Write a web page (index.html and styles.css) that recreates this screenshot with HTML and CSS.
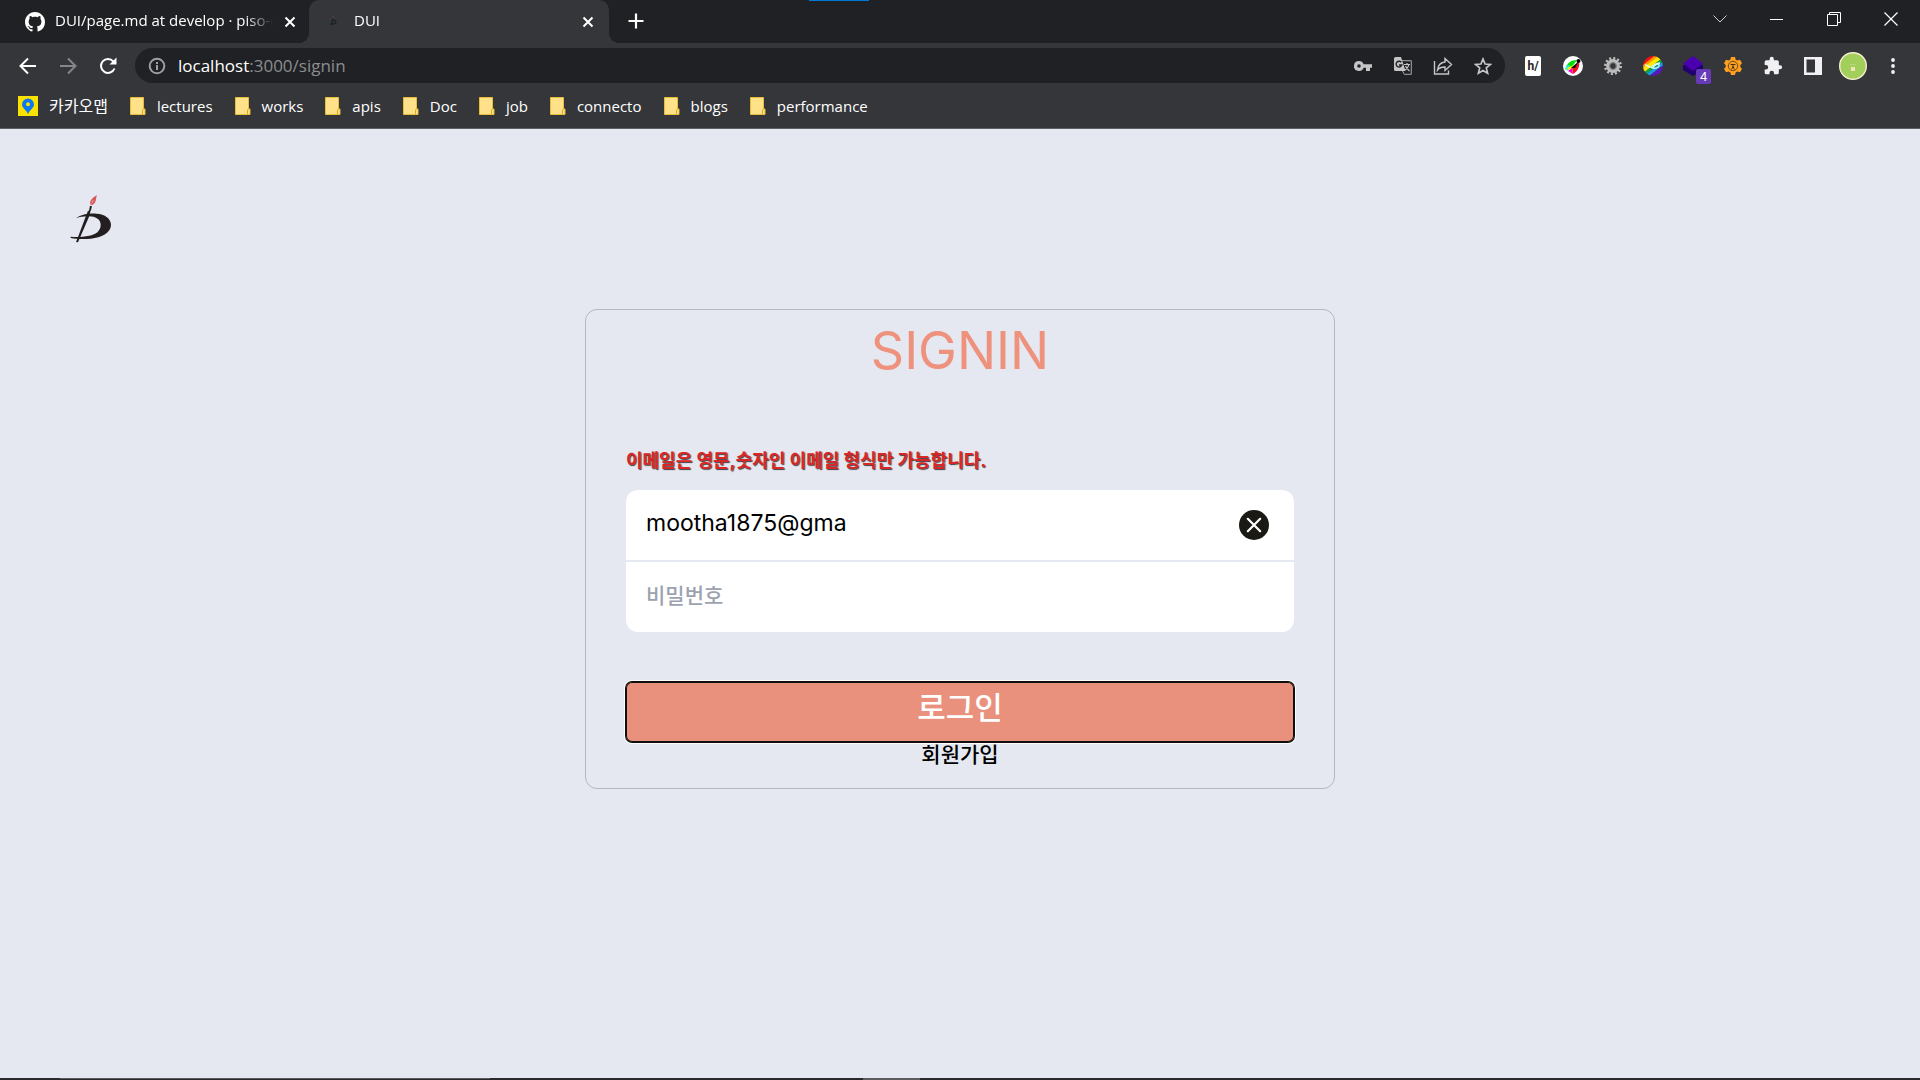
FILE: index.html
```html
<!DOCTYPE html>
<html lang="ko">
<head>
<meta charset="utf-8">
<meta name="viewport" content="width=device-width, initial-scale=1">
<title>DUI</title>
<link rel="stylesheet" href="styles.css">
</head>
<body>
<header class="browser">
  <div class="tabstrip">
    <div class="tab">
      <svg class="tab-icon" viewBox="0 0 16 16" fill="#fff"><path d="M8 0C3.58 0 0 3.58 0 8c0 3.54 2.29 6.53 5.47 7.59.4.07.55-.17.55-.38 0-.19-.01-.82-.01-1.49-2.01.37-2.53-.49-2.69-.94-.09-.23-.48-.94-.82-1.13-.28-.15-.68-.52-.01-.53.63-.01 1.08.58 1.23.82.72 1.21 1.87.87 2.33.66.07-.52.28-.87.51-1.07-1.78-.2-3.64-.89-3.64-3.95 0-.87.31-1.59.82-2.15-.08-.2-.36-1.02.08-2.12 0 0 .67-.21 2.2.82.64-.18 1.32-.27 2-.27s1.36.09 2 .27c1.53-1.04 2.2-.82 2.2-.82.44 1.1.16 1.92.08 2.12.51.56.82 1.27.82 2.15 0 3.07-1.87 3.75-3.65 3.95.29.25.54.73.54 1.48 0 1.07-.01 1.93-.01 2.2 0 .21.15.46.55.38A8.01 8.01 0 0 0 16 8c0-4.42-3.58-8-8-8z"/></svg>
      <span class="tab-title">DUI/page.md at develop · piso-d</span>
      <button class="tab-close" aria-label="Close tab"><svg width="12" height="12" viewBox="0 0 12 12"><path d="M1.500 1.500l9 9m0-9l-9 9" stroke="#fff" stroke-width="2"/></svg></button>
    </div>
    <div class="tab active">
      <svg class="tab-icon" viewBox="0 0 20 20" fill="none"><path d="M9 7l-2 6M8 8c4 0 6 4 0 4" stroke="#202124" stroke-width="1.500"/><path d="M9 4l1 2" stroke="#6b3a3c"/></svg>
      <span class="tab-title">DUI</span>
      <button class="tab-close" aria-label="Close tab"><svg width="12" height="12" viewBox="0 0 12 12"><path d="M1.500 1.500l9 9m0-9l-9 9" stroke="#fff" stroke-width="2"/></svg></button>
    </div>
    <button class="new-tab" aria-label="New tab"><svg width="16" height="16" viewBox="0 0 16 16"><path d="M8 0.500v15M0.500 8h15" stroke="#fff" stroke-width="2.200"/></svg></button>
    <div class="window-controls">
      <button aria-label="Search tabs"><svg width="14" height="14" viewBox="0 0 14 14" fill="none" stroke="#d0d0d2"><path d="M.5 3.500L7 10l6.500-6.500"/></svg></button>
      <button aria-label="Minimize"><svg width="14" height="14" viewBox="0 0 14 14" fill="none" stroke="#fff"><path d="M0 7.500h13"/></svg></button>
      <button aria-label="Restore"><svg width="14" height="14" viewBox="0 0 14 14" fill="none" stroke="#fff"><path d="M.5 2.500h10v11H.5zM2.500 2.500v-2h11v10h-3"/></svg></button>
      <button aria-label="Close"><svg width="14" height="14" viewBox="0 0 14 14" fill="none" stroke="#fff" stroke-width="1.200"><path d="M.5.5l13 13m0-13l-13 13"/></svg></button>
    </div>
  </div>

  <div class="toolbar">
    <button class="nav" aria-label="Back"><svg width="18" height="18" viewBox="0 0 18 18" fill="none" stroke="#fff" stroke-width="2"><path d="M17 9H2M9 1.500L1.500 9 9 16.500"/></svg></button>
    <button class="nav" aria-label="Forward"><svg width="18" height="18" viewBox="0 0 18 18" fill="none" stroke="#85868a" stroke-width="2"><path d="M1 9h15M9 1.500L16.500 9 9 16.500"/></svg></button>
    <button class="nav" aria-label="Reload"><svg width="18" height="18" viewBox="0 0 18 18" fill="none" stroke="#fff" stroke-width="2"><path d="M15.500 11.500a7 7 0 1 1-1.200-7.200L16 6"/><path d="M17.500.5v7h-7z" fill="#fff" stroke="none"/></svg></button>
    <div class="omnibox">
      <svg width="18" height="18" viewBox="0 0 18 18" fill="none" stroke="#9aa0a6" stroke-width="2"><circle cx="9" cy="9" r="7.300"/><path d="M9 8v5M9 5v2"/></svg>
      <div class="url">localhost<span class="url-rest">:3000/signin</span></div>
      <button class="tool" aria-label="Passwords"><svg width="18" height="18" viewBox="0 0 18 18"><path fill="#c5c5c7" fill-rule="evenodd" d="M5 4a5 5 0 1 0 4.600 6.800H12V14h4v-3.200h2V7.200H9.600A5 5 0 0 0 5 4zm0 3.200a1.800 1.800 0 1 1 0 3.600 1.800 1.800 0 0 1 0-3.600z"/></svg></button>
      <button class="tool" aria-label="Translate"><svg width="18" height="18" viewBox="0 0 18 18" fill="none"><path d="M8 3.700h9.300v13.600h-7L8 13" stroke="#a9a9ab" stroke-width="1"/><path d="M0 1.500A1.500 1.500 0 0 1 1.500 0H7l4.500 14H1.500A1.500 1.500 0 0 1 0 12.500z" fill="#c5c5c7"/><path d="M7.300 5.300A2.900 2.900 0 1 0 7.800 8H5" stroke="#202124" stroke-width="1.400"/><path d="M10 7.500h6M13 6v1.500M15 7.500c-.5 2.500-2 4-4 5.500M11.500 9c1 2.500 2 3.500 4 5" stroke="#c5c5c7" stroke-width="1.200"/></svg></button>
      <button class="tool" aria-label="Share"><svg width="20" height="18" viewBox="0 0 20 18" fill="none" stroke="#c5c5c7" stroke-width="1.400"><path d="M1.500 4v13h14v-3.500"/><path d="M12 5V1.500l6.500 6-6.500 6V10c-4 0-6 1-7.500 3C5 8.500 7 5.500 12 5z"/></svg></button>
      <button class="tool" aria-label="Bookmark"><svg width="18" height="18" viewBox="0 0 18 18" fill="none" stroke="#c5c5c7" stroke-width="1.700"><path d="M9 2l2.100 5 5.300.4-4.100 3.500 1.300 5.300L9 13.400l-4.600 2.800 1.300-5.300-4.100-3.500L6.900 7z"/></svg></button>
    </div>
    <div class="extensions">
      <button class="tool" aria-label="Hypothesis"><span class="ext-h">h/</span></button>
      <button class="tool" aria-label="Color picker"><svg width="20" height="20" viewBox="0 0 20 20"><circle cx="10" cy="10" r="10" fill="#fff"/><path d="M3 14C2 9 7 4 14 4L8 12z" fill="#0d0"/><path d="M3 10l-1 3 3 2 2-6z" fill="#2ee"/><path d="M3 13l5 1 3-5-5 2z" fill="#fe0"/><path d="M16 6c1 5-2 10-6 12l-1-6z" fill="#f01020"/><path d="M5 15l4-3 1 6z" fill="#f0c"/><path d="M8 12l8-7-4 7z" fill="#000"/><circle cx="15.500" cy="5" r="2" fill="#000"/></svg></button>
      <button class="tool" aria-label="Gear"><svg width="18" height="18" viewBox="0 0 18 18" fill="none"><circle cx="9" cy="9" r="7.700" stroke="#bdbdbd" stroke-width="2.600" stroke-dasharray="2.020 2.010"/><circle cx="9" cy="9" r="4.900" stroke="#bbb" stroke-width="4"/><circle cx="9" cy="9" r="3.500" stroke="#777"/></svg></button>
      <button class="tool" aria-label="Rainbow"><svg width="20" height="20" viewBox="0 0 20 20"><clipPath id="disc"><circle cx="10" cy="10" r="10"/></clipPath><g clip-path="url(#disc)"><g transform="rotate(-38 10 10)"><path d="M-4-4h28v8H-4z" fill="#ef1111"/><path d="M-4 3h28v3H-4z" fill="#ff9800"/><path d="M-4 5.500h28v4H-4z" fill="#ffe900"/><path d="M-4 9.500h28v3H-4z" fill="#16a34a"/><path d="M-4 12.500h28v3H-4z" fill="#139ee8"/><path d="M-4 15.500h28v8H-4z" fill="#5b16b8"/></g><path d="M2 9c3 0 4 3 6 2s4-4 9-4M8 11c3 3 9 0 8-2s-5 0-6 3" fill="none" stroke="#d8fff5" stroke-width="1.300"/></g></svg></button>
      <button class="tool badged" aria-label="Layers"><svg width="20" height="20" viewBox="0 0 20 20"><path d="M0 9v5l10 6 10-6V9z" fill="#210070"/><path d="M10 0l10 7.500L10 15 0 7.500z" fill="#4b00b0"/></svg><span class="badge">4</span></button>
      <button class="tool" aria-label="Accessibility"><svg width="18" height="18" viewBox="0 0 18 18"><path d="M7 0h4l.6 2.600 1.600 1L16 2.800l2 3.400L16.300 8v2l1.700 1.800-2 3.400-2.800-.8-1.600 1L11 18H7l-.6-2.600-1.600-1-2.800.8-2-3.400L1.700 10V8L0 6.200l2-3.400 2.800.8 1.600-1z" fill="#ffa01e"/><circle cx="9" cy="9" r="4.700" fill="none" stroke="#4a3520" stroke-width=".8"/><path d="M6.500 7.500h5M9 7v3M9 9.500l-1.500 3M9 9.500l1.500 3" stroke="#4a3520"/></svg></button>
      <button class="tool" aria-label="Extensions"><svg width="20" height="20" viewBox="0 0 24 24" fill="#f1f1f3"><path d="M20.500 11H19V7a2 2 0 0 0-2-2h-4V3.500a2.500 2.500 0 0 0-5 0V5H4a2 2 0 0 0-2 2v3.800h1.500a2.700 2.700 0 0 1 0 5.400H2V20a2 2 0 0 0 2 2h3.800v-1.500a2.700 2.700 0 0 1 5.400 0V22H17a2 2 0 0 0 2-2v-4h1.500a2.500 2.500 0 0 0 0-5z"/></svg></button>
      <button class="tool" aria-label="Side panel"><svg width="18" height="18" viewBox="0 0 18 18"><path fill="#f1f1f3" fill-rule="evenodd" d="M0 0h18v18H0zM2.500 2.500v13H11v-13z"/></svg></button>
      <button class="tool" aria-label="Profile"><svg width="28" height="28" viewBox="0 0 28 28"><circle cx="14" cy="14" r="13.300" fill="#a2cf5c" stroke="#f6efcf" stroke-width="1.400"/><path d="M12 15h4v4h-4z" fill="#f3e6b5"/><path d="M11 12.500h6" stroke="#b9d67c"/></svg></button>
      <button class="tool" aria-label="Menu"><svg width="4" height="16" viewBox="0 0 4 16" fill="#f1f1f3"><circle cx="2" cy="2" r="1.900"/><circle cx="2" cy="8" r="1.900"/><circle cx="2" cy="14" r="1.900"/></svg></button>
    </div>
  </div>

  <svg class="defs" width="0" height="0"><symbol id="folder" viewBox="0 0 16 18"><path d="M.5.5h13V12H15v5.500H.5z" fill="#ffe18a" stroke="#e8bd37"/><path d="M12.500 17.500V13l1.500-1.500" fill="none" stroke="#d9ab25"/></symbol></svg>
  <nav class="bookmarks" aria-label="Bookmarks">
    <a href="#"><svg width="20" height="20" viewBox="0 0 20 20"><path d="M0 0h20v20H0z" fill="#fae100"/><path fill="#0c79f2" d="M10 2.500a6 6 0 0 0-6 6c0 3.500 4 5 6 9.500 2-4.500 6-6 6-9.500a6 6 0 0 0-6-6z"/><circle cx="10" cy="8.300" r="2" fill="#fae100"/></svg><span class="korean">카카오맵</span></a>
    <a href="#"><svg class="folder"><use href="#folder"/></svg>lectures</a>
    <a href="#"><svg class="folder"><use href="#folder"/></svg>works</a>
    <a href="#"><svg class="folder"><use href="#folder"/></svg>apis</a>
    <a href="#"><svg class="folder"><use href="#folder"/></svg>Doc</a>
    <a href="#"><svg class="folder"><use href="#folder"/></svg>job</a>
    <a href="#"><svg class="folder"><use href="#folder"/></svg>connecto</a>
    <a href="#"><svg class="folder"><use href="#folder"/></svg>blogs</a>
    <a href="#"><svg class="folder"><use href="#folder"/></svg>performance</a>
  </nav>
</header>

<main class="page">
  <div class="site-header">
    <a class="logo" href="#" aria-label="DUI">
      <svg width="48" height="56" viewBox="60 39 144 168"><path d="M141 46c-3 5-2 13-5 19-2 5-7 9-12 10-4-3-5-9-2-13 4-7 11-13 19-16z" fill="#d9575a"/><path d="M130 60l-5 10" stroke="#e9c9cf" stroke-width="2"/><path d="M120 77l6 2-4 14-6 4z" fill="#231f20"/><path d="M78 115c15-11 38-15 61-14 26 1 44 15 44 34 0 24-30 38-60 41-24 2-42 1-61-2v-4c20 2 36 1 51-2 26-4 39-16 39-34 0-17-18-26-38-25-15 1-25 1-36 6z" fill="#231f20"/><path d="M114 92l7 2-2 12-35 81-6-1 5-12 25-67z" fill="#231f20"/></svg>
    </a>
  </div>
  <form class="card">
    <h1>SIGNIN</h1>
    <p class="error" id="email-error">이메일은 영문,숫자인 이메일 형식만 가능합니다.</p>
    <div class="fields">
      <div class="field">
        <input type="text" value="mootha1875@gma" aria-label="이메일" aria-describedby="email-error">
        <button class="clear" type="button" aria-label="지우기"><svg width="30" height="30" viewBox="0 0 30 30"><circle cx="15" cy="15" r="15" fill="#1a1914"/><path d="M8.800 8.800l12.400 12.400m0-12.400L8.800 21.200" stroke="#fff" stroke-width="2.200" stroke-linecap="round"/></svg></button>
      </div>
      <div class="field">
        <input type="password" placeholder="비밀번호" aria-label="비밀번호">
      </div>
    </div>
    <button class="submit" type="button">로그인</button>
    <a class="signup" href="#">회원가입</a>
  </form>
</main>
<footer class="taskbar-edge"></footer>
</body>
</html>
```
FILE: styles.css
```css
* { box-sizing: border-box; }

body {
  margin: 0;
  min-height: 100vh;
  display: flex;
  flex-direction: column;
  background: #e5e8f0;
  color: #000;
  font-family: "Inter", "Noto Sans CJK KR", sans-serif;
}

button {
  padding: 0;
  border: 0;
  background: none;
  font: inherit;
  color: inherit;
  display: flex;
  align-items: center;
  justify-content: center;
}

a { color: inherit; text-decoration: none; }
svg { display: block; flex: none; }
.defs { position: absolute; }

/* Browser frame */
.browser {
  background: #35363a;
  color: #fff;
  border-bottom: 1px solid #5f6063;
  font-family: "Open Sans", "Noto Sans CJK KR", sans-serif;
  font-size: 15px;
  line-height: 20px;
}

.tabstrip {
  display: flex;
  height: 43px;
  background: linear-gradient(#0078d7, #0078d7) 809px 0 / 60px 1px no-repeat #202124;
}

.tab {
  position: relative;
  display: flex;
  align-items: center;
  gap: 10px;
  width: 309px;
  padding: 0 12px 0 25px;
}

.tab.active {
  width: 300px;
  padding-right: 14px;
  padding-left: 15px;
  border-radius: 10px 10px 0 0;
  background: #35363a;
}

.tab.active::before,
.tab.active::after {
  content: "";
  position: absolute;
  bottom: 0;
  width: 10px;
  height: 10px;
}
.tab.active::before { right: 100%; background: radial-gradient(circle at 0 0, #202124 10px, #35363a 10px); }
.tab.active::after { left: 100%; background: radial-gradient(circle at 100% 0, #202124 10px, #35363a 10px); }

.tab-icon { width: 20px; height: 20px; }
.tab-title {
  flex: 1;
  overflow: hidden;
  padding-bottom: 3px;
  white-space: nowrap;
  mask-image: linear-gradient(90deg, #000 calc(100% - 28px), transparent);
}
.tab-close { width: 14px; height: 20px; }
.new-tab { width: 54px; height: 42px; }

.window-controls { display: flex; margin-left: auto; padding-right: 1px; }
.window-controls button { width: 57px; height: 37px; }

.toolbar {
  display: flex;
  align-items: center;
  height: 45px;
  padding: 0 7px 0 8px;
}
.nav { width: 40px; height: 36px; }

.omnibox {
  flex: 1;
  display: flex;
  align-items: center;
  height: 35px;
  margin: 0 8px 0 7px;
  padding: 0 2px 0 13px;
  border-radius: 18px;
  background: #202124;
}
.url { flex: 1; margin-left: 12px; font-size: 17px; }
.url-rest { color: #8b8d91; }

.tool { width: 40px; height: 34px; }
.extensions { display: flex; }

.ext-h {
  width: 16px;
  height: 20px;
  border-radius: 2px;
  background: #fff;
  color: #222;
  font: bold 12px/20px "Roboto", sans-serif;
  text-align: center;
}

.badged { position: relative; }
.badge {
  position: absolute;
  right: 2px;
  bottom: -1px;
  width: 15px;
  height: 15px;
  border-radius: 2px;
  background: #673ab7;
  font: 13px/15px "Liberation Sans", sans-serif;
}

.bookmarks {
  display: flex;
  align-items: center;
  gap: 22px;
  height: 40px;
  padding: 0 18px 5px;
}
.bookmarks a { display: flex; align-items: center; gap: 11px; }
.bookmarks .korean { font-size: 16px; }
.folder { width: 16px; height: 18px; }

/* Sign-in page */
.page { flex: 1; }

.site-header {
  height: 180px;
  padding: 64px 70px 0;
}
.logo { display: inline-block; }

.card {
  display: flex;
  flex-direction: column;
  width: 100%;
  max-width: 750px;
  margin: 0 auto;
  padding: 8px 40px 20px;
  border: 1px solid #b5b7bc;
  border-radius: 12px;
}

h1 {
  margin: 0;
  color: #ee917d;
  font-size: 52px;
  font-weight: 400;
  line-height: 66px;
  text-align: center;
}

.error {
  margin: 63px 0 15px;
  color: #dc2626;
  font-size: 18px;
  font-weight: 700;
  line-height: 28px;
  text-shadow: 1px 1px 1px #3f3f46;
}

.fields {
  display: flex;
  flex-direction: column;
  gap: 2px;
  overflow: hidden;
  border-radius: 12px;
}
.field {
  display: flex;
  align-items: center;
  height: 70px;
  padding: 0 25px 0 20px;
  background: #fff;
}
.field input {
  flex: 1;
  min-width: 0;
  padding: 0 0 4px;
  border: 0;
  outline: 0;
  background: none;
  color: #000;
  font: 23px/30px "Inter", "Noto Sans CJK KR", sans-serif;
}
.field input::placeholder { color: #9ca3af; opacity: 1; font-size: 21px; font-weight: 500; }

.submit {
  height: 60px;
  margin-top: 50px;
  padding-bottom: 8px;
  border-radius: 6px;
  background: #e9917d;
  color: #fff;
  font-size: 31px;
  font-weight: 500;
  line-height: 40px;
  box-shadow: inset 0 0 0 1px #101010, 0 0 0 1px #101010, 0 0 0 2px #fff;
}

.signup {
  align-self: center;
  font-size: 21px;
  font-weight: 500;
  line-height: 26px;
}

/* Top edge of the auto-hidden taskbar */
.taskbar-edge {
  height: 2px;
  background:
    linear-gradient(#5a5a5a, #5a5a5a) 60px 0 / 430px 1px no-repeat,
    linear-gradient(#5c5c60, #5c5c60) 863px 0 / 57px 2px no-repeat,
    #2a292e;
}
```
